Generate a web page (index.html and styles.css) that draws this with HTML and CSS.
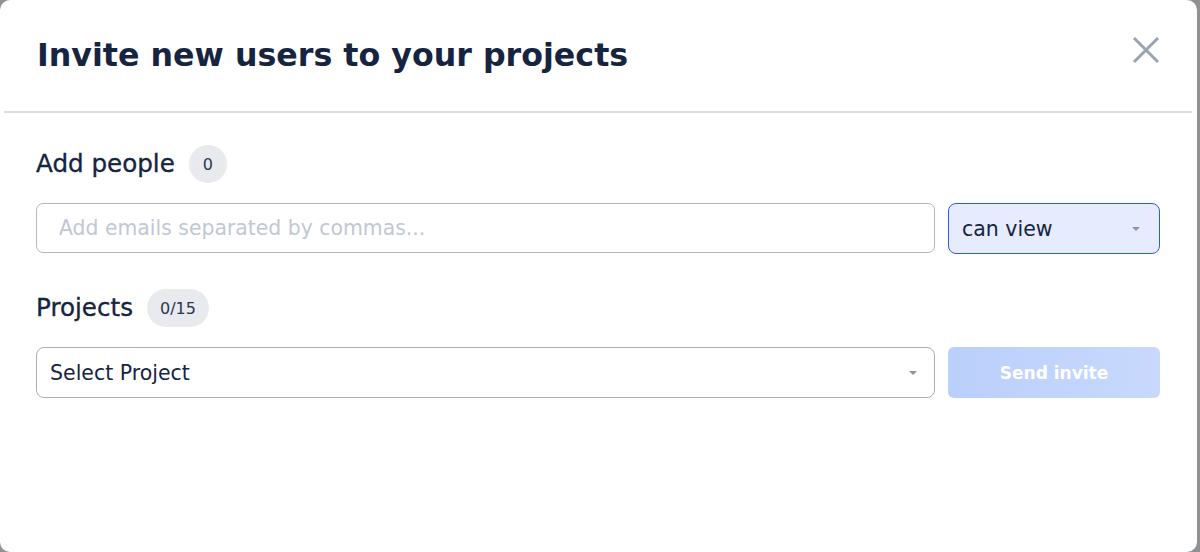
FILE: index.html
```html
<!DOCTYPE html>
<html lang="en">

<head>
  <meta charset="UTF-8">
  <meta name="viewport" content="width=device-width, initial-scale=1.0">
  <title>Invite users</title>
  <link rel="stylesheet" href="styles.css">
</head>

<body>
  <div class="modal">
    <div class="modal-header">
      <h1>Invite new users to your projects</h1>
      <button class="close-btn" aria-label="Close">
        <svg width="30" height="30" viewBox="0 0 30 30">
          <path d="M3 3 L27 27 M27 3 L3 27" stroke="#9ba3b3" stroke-width="3" fill="none" />
        </svg>
      </button>
    </div>

    <div class="modal-body">
      <div class="label-row">
        <span class="label">Add people</span>
        <span class="badge round">0</span>
      </div>
      <div class="field-row">
        <input class="text-input" type="text" placeholder="Add emails separated by commas...">
        <div class="select role-select">
          <span>can view</span>
          <span class="caret"></span>
        </div>
      </div>

      <div class="label-row">
        <span class="label">Projects</span>
        <span class="badge">0/15</span>
      </div>
      <div class="field-row">
        <div class="select project-select">
          <span>Select Project</span>
          <span class="caret"></span>
        </div>
        <button class="send-btn" disabled>Send invite</button>
      </div>
    </div>
  </div>
</body>

</html>
```

FILE: styles.css
```css
html, body {
  margin: 0;
  height: 100%;
}

body {
  background: #8f9193;
  font-family: "DejaVu Sans", "Noto Sans", Arial, sans-serif;
  color: #16243f;
}

.modal {
  background: #fff;
  height: 552px;
  width: 1197px;
  border-radius: 10px;
  box-sizing: border-box;
}

.modal-header {
  display: flex;
  justify-content: space-between;
  align-items: center;
  height: 111px;
  margin: 0 5px 0 4px;
  padding: 0 31px 0 33px;
  border-bottom: 2px solid #d9dde3;
}

h1 {
  margin: 0;
  font-size: 31.7px;
  font-weight: 700;
  padding-bottom: 2px;
}

.close-btn {
  background: none;
  border: none;
  padding: 0;
  cursor: pointer;
  display: flex;
  margin-bottom: 12px;
}

.modal-body {
  padding: 32px 37px 0 36px;
}

.label-row {
  display: flex;
  align-items: center;
  gap: 14px;
  height: 38px;
}

.label {
  font-size: 24.6px;
  -webkit-text-stroke: 0.35px currentColor;
  margin-top: -2px;
}

.badge {
  background: #e8eaee;
  border-radius: 19px;
  height: 38px;
  padding: 0 13px;
  display: flex;
  align-items: center;
  font-size: 16px;
  color: #2a3652;
}

.badge.round {
  width: 38px;
  padding: 0;
  justify-content: center;
}

.field-row {
  display: flex;
  gap: 13px;
  margin-top: 20px;
  margin-bottom: 35px;
}

.text-input {
  flex: 1;
  height: 50px;
  box-sizing: border-box;
  border: 1px solid #aeb7c6;
  border-radius: 7px;
  padding: 0 22px;
  font-family: inherit;
  font-size: 20.4px;
  color: #16243f;
  outline: none;
}

.text-input::placeholder {
  color: #c1c7d3;
}

.select {
  height: 51px;
  box-sizing: border-box;
  border-radius: 8px;
  display: flex;
  align-items: center;
  justify-content: space-between;
  font-size: 20.5px;
}

.role-select {
  width: 212px;
  background: #e6ecfd;
  border: 1px solid #2b5fe0;
  padding: 0 19px 0 13px;
}

.project-select {
  flex: 1;
  border: 1px solid #a5afbf;
  padding: 0 17px 0 13px;
}

.caret {
  width: 0;
  height: 0;
  border-left: 4px solid transparent;
  border-right: 4px solid transparent;
  border-top: 4px solid #8c94a3;
}

.send-btn {
  width: 212px;
  height: 51px;
  border: none;
  border-radius: 6px;
  background: linear-gradient(90deg, #bacffb, #c9d9fd);
  color: #fff;
  font-family: inherit;
  font-size: 17px;
  font-weight: 700;
}
```
